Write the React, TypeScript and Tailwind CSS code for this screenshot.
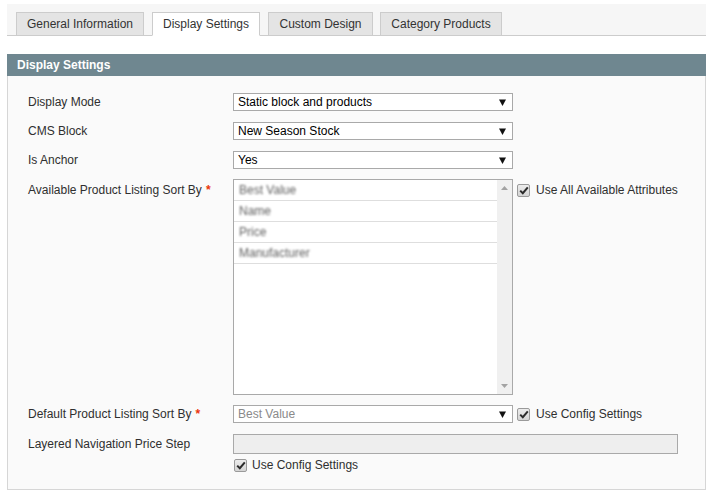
const tabs = [
    { label: "General Information", w: "w-[128px]", ml: "ml-[9px]" },
    { label: "Display Settings", w: "w-[108px]", ml: "ml-[8px]", active: true },
    { label: "Custom Design", w: "w-[105px]", ml: "ml-[8px]" },
    { label: "Category Products", w: "w-[122px]", ml: "ml-[7px]" },
];

const sortOptions = ["Best Value", "Name", "Price", "Manufacturer"];

const Arrow = () => (
    <svg width="7" height="7" viewBox="0 0 7 7" className="shrink-0">
        <path d="M0 0.5H7L3.5 7Z" fill="#111" />
    </svg>
);

const Checkbox = () => (
    <div className="w-[13px] h-[13px] shrink-0 rounded-[2px] border border-[#9a9a9a] bg-gradient-to-b from-[#ececec] to-[#d4d4d4] flex items-center justify-center">
        <svg width="10" height="9" viewBox="0 0 10 9">
            <path d="M1.2 4.6 L3.8 7.2 L8.8 1.4" fill="none" stroke="#2b2b2b" strokeWidth="2" />
        </svg>
    </div>
);

const Select = ({ value, muted }: { value: string; muted?: boolean }) => (
    <div className="w-[280px] h-[18px] bg-white border border-[#a9a9a9] flex items-center pl-[4px] pr-[6px]">
        <span className={`flex-1 ${muted ? "text-[#8a8a8a]" : "text-black"}`}>{value}</span>
        <Arrow />
    </div>
);

const Label = ({ text, required }: { text: string; required?: boolean }) => (
    <div className="w-[205px] shrink-0 text-[#2f2f2f]">
        {text}
        {required && <span className="text-[#eb340a] font-bold ml-[4px]">*</span>}
    </div>
);

export default function App() {
    return (
        <div
            className="w-[713px] h-[498px] bg-white text-[12px] leading-[14px]"
            style={{ fontFamily: '"Liberation Sans", Arial, sans-serif' }}
        >
            <div className="pt-[4px]">
                <div className="mx-[7px] h-[32px] bg-[#f6f6f6] border-b border-[#cccccc] flex items-end pt-[8px]">
                    {tabs.map((t) => (
                        <div
                            key={t.label}
                            className={`${t.w} ${t.ml} h-[24px] -mb-px border border-[#cccccc] flex items-center justify-center text-[#333] ${
                                t.active ? "bg-white border-b-white" : "bg-[#e4e4e4]"
                            }`}
                        >
                            {t.label}
                        </div>
                    ))}
                </div>
            </div>

            <div className="mx-[7px] mt-[18px]">
                <div className="h-[22px] bg-[#6f8790] text-white font-bold flex items-center pl-[10px]">
                    Display Settings
                </div>
                <div className="h-[414px] bg-[#fafafa] border border-t-0 border-[#d6d6d6] pl-[20px] pt-[17px]">
                    <div className="flex items-center">
                        <Label text="Display Mode" />
                        <Select value="Static block and products" />
                    </div>
                    <div className="flex items-center mt-[11px]">
                        <Label text="CMS Block" />
                        <Select value="New Season Stock" />
                    </div>
                    <div className="flex items-center mt-[11px]">
                        <Label text="Is Anchor" />
                        <Select value="Yes" />
                    </div>

                    <div className="flex items-start mt-[10px]">
                        <div className="pt-[4px]">
                            <Label text="Available Product Listing Sort By" required />
                        </div>
                        <div className="w-[280px] h-[216px] bg-white border border-[#a9a9a9] flex">
                            <div className="flex-1">
                                {sortOptions.map((o) => (
                                    <div
                                        key={o}
                                        className="h-[21px] border-b border-[#dedede] flex items-center pl-[5px]"
                                    >
                                        <span className="text-[#5f5f5f] blur-[1px]">{o}</span>
                                    </div>
                                ))}
                            </div>
                            <div className="w-[15px] bg-[#f0f0f0] flex flex-col justify-between items-center py-[6px]">
                                <svg width="7" height="4" viewBox="0 0 7 4">
                                    <path d="M0 4H7L3.5 0Z" fill="#a3a3a3" />
                                </svg>
                                <svg width="7" height="4" viewBox="0 0 7 4">
                                    <path d="M0 0H7L3.5 4Z" fill="#a3a3a3" />
                                </svg>
                            </div>
                        </div>
                        <div className="flex items-center ml-[4px] mt-[4px]">
                            <Checkbox />
                            <span className="ml-[6px] text-[#2f2f2f]">Use All Available Attributes</span>
                        </div>
                    </div>

                    <div className="flex items-center mt-[10px]">
                        <Label text="Default Product Listing Sort By" required />
                        <Select value="Best Value" muted />
                        <div className="flex items-center ml-[4px]">
                            <Checkbox />
                            <span className="ml-[6px] text-[#2f2f2f]">Use Config Settings</span>
                        </div>
                    </div>

                    <div className="flex items-center mt-[11px]">
                        <Label text="Layered Navigation Price Step" />
                        <div className="w-[445px] h-[20px] bg-[#eeeeee] border border-[#a9a9a9]" />
                    </div>
                    <div className="flex items-center mt-[4px] ml-[206px]">
                        <Checkbox />
                        <span className="ml-[5px] text-[#2f2f2f]">Use Config Settings</span>
                    </div>
                </div>
            </div>
        </div>
    );
}
